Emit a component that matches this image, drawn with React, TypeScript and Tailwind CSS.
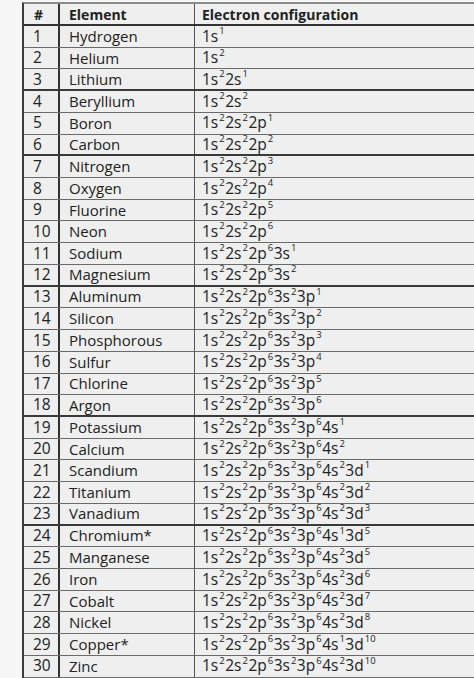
const elements: [number, string, string][] = [
  [1, 'Hydrogen', '1s1'],
  [2, 'Helium', '1s2'],
  [3, 'Lithium', '1s2 2s1'],
  [4, 'Beryllium', '1s2 2s2'],
  [5, 'Boron', '1s2 2s2 2p1'],
  [6, 'Carbon', '1s2 2s2 2p2'],
  [7, 'Nitrogen', '1s2 2s2 2p3'],
  [8, 'Oxygen', '1s2 2s2 2p4'],
  [9, 'Fluorine', '1s2 2s2 2p5'],
  [10, 'Neon', '1s2 2s2 2p6'],
  [11, 'Sodium', '1s2 2s2 2p6 3s1'],
  [12, 'Magnesium', '1s2 2s2 2p6 3s2'],
  [13, 'Aluminum', '1s2 2s2 2p6 3s2 3p1'],
  [14, 'Silicon', '1s2 2s2 2p6 3s2 3p2'],
  [15, 'Phosphorous', '1s2 2s2 2p6 3s2 3p3'],
  [16, 'Sulfur', '1s2 2s2 2p6 3s2 3p4'],
  [17, 'Chlorine', '1s2 2s2 2p6 3s2 3p5'],
  [18, 'Argon', '1s2 2s2 2p6 3s2 3p6'],
  [19, 'Potassium', '1s2 2s2 2p6 3s2 3p6 4s1'],
  [20, 'Calcium', '1s2 2s2 2p6 3s2 3p6 4s2'],
  [21, 'Scandium', '1s2 2s2 2p6 3s2 3p6 4s2 3d1'],
  [22, 'Titanium', '1s2 2s2 2p6 3s2 3p6 4s2 3d2'],
  [23, 'Vanadium', '1s2 2s2 2p6 3s2 3p6 4s2 3d3'],
  [24, 'Chromium*', '1s2 2s2 2p6 3s2 3p6 4s1 3d5'],
  [25, 'Manganese', '1s2 2s2 2p6 3s2 3p6 4s2 3d5'],
  [26, 'Iron', '1s2 2s2 2p6 3s2 3p6 4s2 3d6'],
  [27, 'Cobalt', '1s2 2s2 2p6 3s2 3p6 4s2 3d7'],
  [28, 'Nickel', '1s2 2s2 2p6 3s2 3p6 4s2 3d8'],
  [29, 'Copper*', '1s2 2s2 2p6 3s2 3p6 4s1 3d10'],
  [30, 'Zinc', '1s2 2s2 2p6 3s2 3p6 4s2 3d10'],
];

// rows followed by a heavier rule in the photo
const heavy = [3, 6, 12, 18, 23];

function Config({ value }: { value: string }) {
  return (
    <span className="whitespace-nowrap text-[15.5px]">
      {value.split(' ').map((tok, i) => (
        <span key={i}>
          {tok.slice(0, 2)}
          <sup className="text-[9.5px] top-[-0.8em] ml-[1px] mr-[0.5px]">{tok.slice(2)}</sup>
        </span>
      ))}
    </span>
  );
}

export default function App() {
  return (
    <div
      className="w-[474px] h-[678px] overflow-hidden bg-[#f6f6f6] pt-[2px] pl-[22px] text-[15px] font-medium text-[#222]"
      style={{ fontFamily: '"Open Sans", "Liberation Sans", sans-serif' }}
    >
      <div className="w-[470px] bg-[#efefef] border-l-2 border-[#3a3a3a] border-t-2 border-t-[#8a8a8a]">
        <div className="flex h-[22px] items-center border-b-2 border-[#333] font-bold text-[14px]">
          <div className="w-[36px] h-full flex items-center pl-[10px] border-r-2 border-[#333]">#</div>
          <div className="w-[135px] h-full flex items-center pl-[9px] border-r border-[#555]">Element</div>
          <div className="flex-1 h-full flex items-center pl-[7px]">Electron configuration</div>
        </div>
        {elements.map(([n, name, cfg]) => (
          <div
            key={n}
            className={
              'flex h-[21.73px] items-center ' +
              (heavy.includes(n) ? 'border-b-2 border-[#3a3a3a]' : 'border-b border-[#6a6a6a]')
            }
          >
            <div className="w-[36px] h-full flex items-center pl-[9px] border-r-2 border-[#333] leading-none text-[15.5px]">{n}</div>
            <div className="w-[135px] h-full flex items-center pl-[9px] border-r border-[#555] leading-none">{name}</div>
            <div className="flex-1 h-full flex items-center pl-[7px] leading-none">
              <Config value={cfg} />
            </div>
          </div>
        ))}
      </div>
    </div>
  );
}
